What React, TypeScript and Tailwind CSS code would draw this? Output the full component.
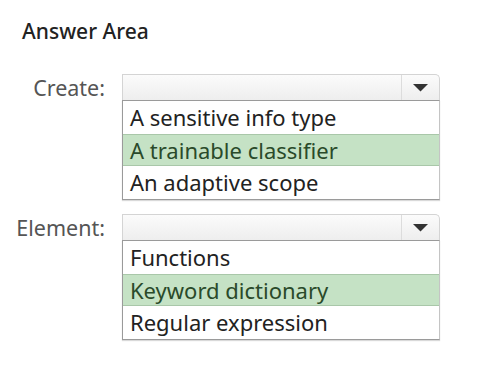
const createOptions = ["A sensitive info type", "A trainable classifier", "An adaptive scope"]
const elementOptions = ["Functions", "Keyword dictionary", "Regular expression"]

function DropdownRow({ label, options, selected }: { label: string; options: string[]; selected: number }) {
    return (
        <div className="flex items-start">
            <div className="flex h-[28px] w-[105px] shrink-0 items-center justify-end text-[21.5px] text-[#555]">
                {label}
            </div>
            <div className="ml-[17px] w-[318px]">
                <div className="flex h-[26px] rounded-tr-[5px] border border-b-0 border-[#d4d4d4] bg-gradient-to-b from-[#fbfbfb] to-[#eeeeee]">
                    <div className="flex-1" />
                    <div className="flex w-[38px] items-center justify-center border-l border-[#dcdcdc]">
                        <svg width="15" height="8" viewBox="0 0 15 8">
                            <path d="M0 0 L15 0 L7.5 7.5 Z" fill="#333" />
                        </svg>
                    </div>
                </div>
                <div className="border border-l-[1.5px] border-[#9a9a9a] border-r-[#c4c4c4] bg-white shadow-[0_1px_1px_rgba(0,0,0,0.15)]">
                    {options.map((opt, i) => (
                        <div
                            key={opt}
                            className={
                                i === selected
                                    ? "flex h-[32px] items-center border-y border-[#a9c7a9] bg-[#c5e2c5] px-[7px] text-[22px] text-[#2a4a2a]"
                                    : "flex h-[33px] items-center px-[7px] text-[22px] text-[#222]"
                            }
                        >
                            {opt}
                        </div>
                    ))}
                </div>
            </div>
        </div>
    )
}

export default function App() {
    return (
        <div className="h-[375px] w-[480px] bg-white font-['Noto_Sans',sans-serif]">
            <div className="pl-[22px] pt-[17px] text-[21px] font-medium leading-[28px] text-[#222]">Answer Area</div>
            <div className="mt-[29px] flex flex-col gap-[14px]">
                <DropdownRow label="Create:" options={createOptions} selected={1} />
                <DropdownRow label="Element:" options={elementOptions} selected={1} />
            </div>
        </div>
    )
}
